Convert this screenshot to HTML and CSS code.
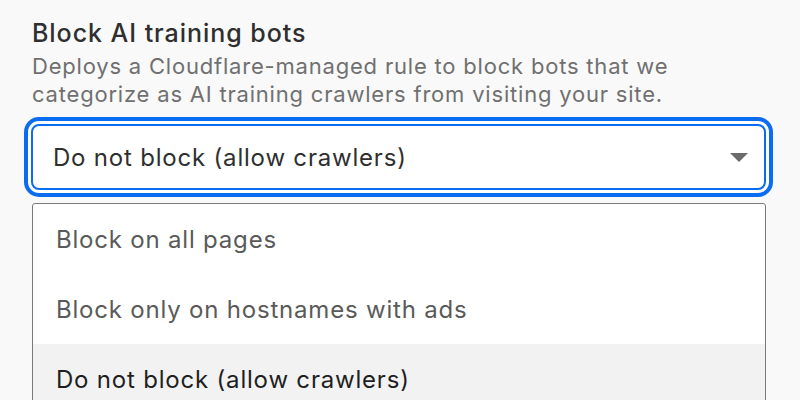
FILE: index.html
```html
<!DOCTYPE html>
<html lang="en">
<head>
<meta charset="utf-8">
<title>Block AI training bots</title>
<link rel="stylesheet" href="styles.css">
</head>
<body>
<div class="field">
  <div class="field-title">Block AI training bots</div>
  <p class="field-desc">Deploys a Cloudflare-managed rule to block bots that we categorize as AI training crawlers from visiting your site.</p>
  <div class="select">
    <span class="select-value">Do not block (allow crawlers)</span>
    <svg class="select-caret" width="18" height="9" viewBox="0 0 18 9" aria-hidden="true"><path d="M0 0H18L9 9Z" fill="#6b6b6b"/></svg>
  </div>
  <ul class="menu">
    <li class="menu-item">Block on all pages</li>
    <li class="menu-item">Block only on hostnames with ads</li>
    <li class="menu-item is-selected">Do not block (allow crawlers)</li>
  </ul>
</div>
</body>
</html>
```
FILE: styles.css
```css
html, body {
  margin: 0;
  height: 100%;
  overflow: hidden;
}

body {
  background: #f9f9f9;
  font-family: Inter, "Noto Sans", sans-serif;
  letter-spacing: 0.8px;
}

.field {
  display: flex;
  flex-direction: column;
  padding: 17px 0 0 32px;
  width: 734px;
}

.field-title {
  font-size: 25px;
  line-height: 32px;
  color: #2f2f2f;
  font-weight: 500;
  letter-spacing: 0.95px;
}

.field-desc {
  margin: 3px 0 0;
  font-size: 22px;
  line-height: 28px;
  color: #707070;
  max-width: 700px;
}

.select {
  margin: 16px 0 0 -1px;
  height: 62px;
  display: flex;
  align-items: center;
  justify-content: space-between;
  padding: 0 16px 0 20px;
  background: #fff;
  border: 2px solid #0a6cf0;
  border-radius: 8px;
  box-shadow: 0 0 0 3px #fff, 0 0 0 7px #0a6cf0;
}

.select-value {
  font-size: 24px;
  color: #2f2f2f;
}

.select-caret {
  display: block;
}

.menu {
  list-style: none;
  margin: 13px 0 0;
  padding: 0;
  background: #fff;
  border: 1px solid #7a7a7a;
  border-radius: 3px;
}

.menu-item {
  height: 70px;
  display: flex;
  align-items: center;
  padding-left: 23px;
  font-size: 24px;
  color: #5a5a5a;
}

.menu-item.is-selected {
  background: #f2f2f2;
  color: #1f1f1f;
}
```
